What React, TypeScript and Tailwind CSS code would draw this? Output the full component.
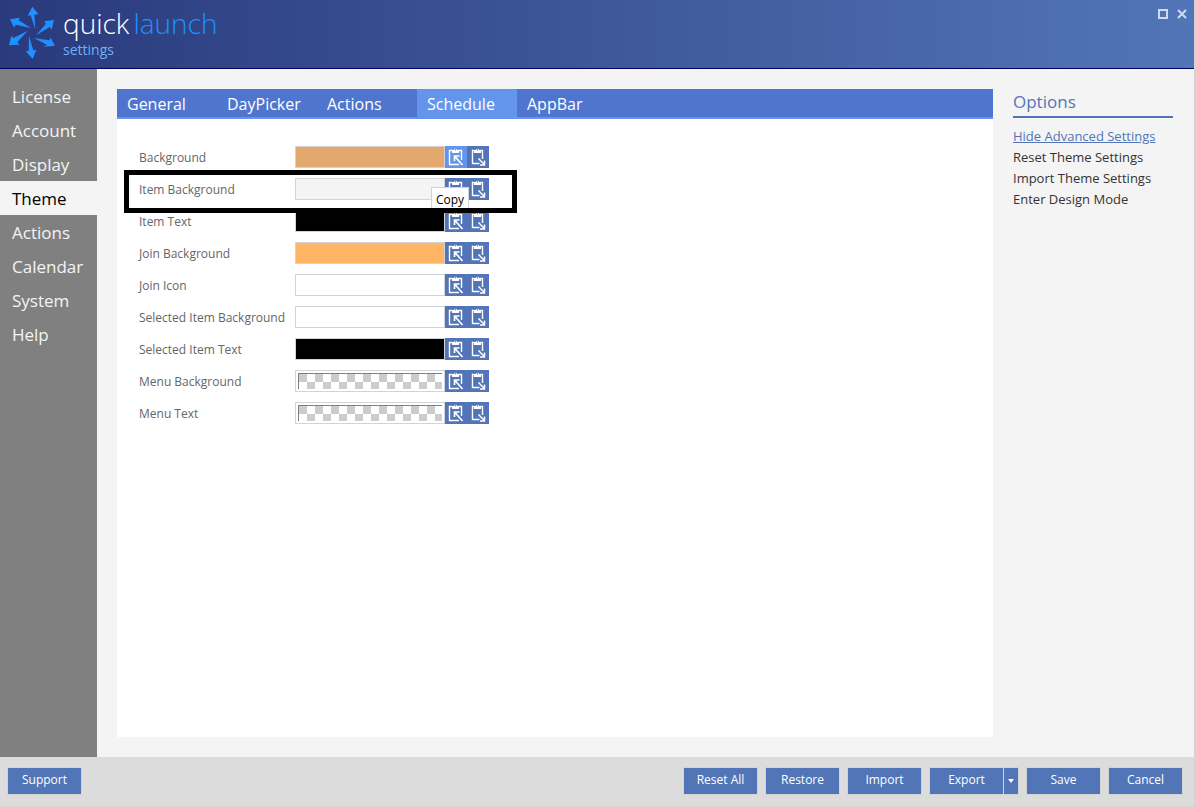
import React from 'react';

const menu = ['License', 'Account', 'Display', 'Theme', 'Actions', 'Calendar', 'System', 'Help'];

const tabs = ['General', 'DayPicker', 'Actions', 'Schedule', 'AppBar'];

const colors = [
  { name: 'Background', fill: 'bg-[#e3a96c]' },
  { name: 'Item Background', fill: 'bg-[#f4f4f4]' },
  { name: 'Item Text', fill: 'bg-black' },
  { name: 'Join Background', fill: 'bg-[#ffb566]' },
  { name: 'Join Icon', fill: 'bg-white' },
  { name: 'Selected Item Background', fill: 'bg-white' },
  { name: 'Selected Item Text', fill: 'bg-black' },
  { name: 'Menu Background', fill: '' },
  { name: 'Menu Text', fill: '' },
];

const options = ['Reset Theme Settings', 'Import Theme Settings', 'Enter Design Mode'];

const Logo = () => (
  <svg viewBox="24 18 144 162" className="w-12 h-[54px] shrink-0" fill="#1e90ff" aria-hidden="true">
    <path d="M97 20 83 47l9-1 14 42-3-44 12-2z" />
    <path d="M162 60l-30 4 6 7-30 35 41-25 6 8z" />
    <path d="M165 137l-13-24-4 8-47-7 40 20-10 6z" />
    <path d="M98 177l11-27-9 1-13-43-1 45-9 1z" />
    <path d="M27 136l31-2-6-7 31-35-43 22-6-7z" />
    <path d="M30 58l12 25 5-9 46 10-37-23 3-8z" />
  </svg>
);

const Clipboard = () => (
  <g stroke="none">
    <path d="M7 4h1.700a1.900 1.900 0 0 1 3.600 0H14v3H7z" fill="#fff" />
    <circle cx="10.500" cy="3.800" r=".7" fill="#5275b8" />
  </g>
);

const CopyIcon = () => (
  <svg viewBox="0 0 22 22" className="w-[22px] h-[22px]" fill="none" stroke="#fff" strokeWidth="1.4" aria-hidden="true">
    <path d="M7.500 4.500h-3v14h9.500M13.500 4.500h3v9.500" />
    <path d="M9.500 15v-5h5M9.500 10l8 9" strokeWidth="1.700" />
    <Clipboard />
  </svg>
);

const PasteIcon = () => (
  <svg viewBox="0 0 22 22" className="w-[22px] h-[22px]" fill="none" stroke="#fff" strokeWidth="1.4" aria-hidden="true">
    <path d="M7.500 4.500h-2v13h7M13.500 4.500h2v8.500" />
    <path d="M11.500 12.500l6 6.200M17.500 14.500v4.500h-4.500" strokeWidth="1.500" />
    <Clipboard />
  </svg>
);

const FooterButton = ({ children }: { children: React.ReactNode }) => (
  <button className="w-[75px] h-7 pb-0.5 bg-[#5275b8] border border-[#d3d3d3] text-white text-xs leading-4">
    {children}
  </button>
);

const App = () => {
  return (
    <div className="flex flex-col min-h-screen bg-[#f4f4f4] border-r border-[#d3d3d3] font-['Open_Sans','Noto_Sans',sans-serif]">
      {/* Title bar */}
      <header className="flex items-start h-[69px] pl-2 pt-1.5 pr-1.5 border-b border-[#000066] bg-linear-to-r from-[#2a3a7c] to-[#5275b8]">
        <Logo />
        <div className="ml-[7px] flex-1">
          <h1 className="text-[28px] leading-[34px] font-light text-white">
            quick<span className="ml-1 text-[#1e90ff]">launch</span>
          </h1>
          <p className="mt-0.5 text-sm leading-4 text-[#6fb1f7]">settings</p>
        </div>
        <div className="flex gap-[5px]">
          <button aria-label="Maximize" className="p-0.5">
            <svg viewBox="0 0 12 12" className="w-3 h-3" fill="none" stroke="#d0daee" strokeWidth="2">
              <path d="M2 2h8v8H2z" />
            </svg>
          </button>
          <button aria-label="Close" className="py-0.5">
            <svg viewBox="0 0 12 12" className="w-3 h-3" stroke="#d0daee" strokeWidth="2">
              <path d="M2 2l8 8M10 2l-8 8" />
            </svg>
          </button>
        </div>
      </header>

      <div className="flex flex-1">
        {/* Sidebar */}
        <nav className="w-[97px] shrink-0 pt-2.5 bg-[#808080]">
          {menu.map((item) => (
            <a
              key={item}
              href="#"
              className={`block h-[34px] pl-3 text-[17px] leading-9 ${
                item === 'Theme' ? 'bg-[#f4f4f4] text-black' : 'text-[#f4f4f4]'
              }`}
            >
              {item}
            </a>
          ))}
        </nav>

        {/* Theme panel */}
        <main className="flex-1 m-5 bg-white">
          <div className="flex h-[30px] bg-[#5075ce] border-b-2 border-[#6495ed]">
            {tabs.map((tab) => (
              <button
                key={tab}
                className={`w-[100px] pl-2.5 pt-0.5 text-left text-base leading-[26px] text-white ${
                  tab === 'Schedule' ? 'bg-[#6495ed]' : ''
                }`}
              >
                {tab}
              </button>
            ))}
          </div>

          <div className="relative flex flex-col gap-2.5 pt-[27px] pl-[22px]">
            {colors.map((color, i) => (
              <div key={color.name} className="flex h-[22px]">
                <label htmlFor={`color-${i}`} className="w-[156px] text-xs leading-6 text-[#666] whitespace-nowrap">
                  {color.name}
                </label>
                <button
                  id={`color-${i}`}
                  className={`w-[150px] border border-[#d3d3d3] ${color.fill || 'p-0.5 bg-white'}`}
                >
                  {!color.fill && (
                    <span className="block h-4 border-t border-l border-[#808080] bg-[conic-gradient(#fff_25%,#ccc_0_50%,#fff_0_75%,#ccc_0)] bg-size-[16px_16px]" />
                  )}
                </button>
                <button aria-label="Copy" className={i === 0 ? 'bg-[#6495ed]' : 'bg-[#5275b8]'}>
                  <CopyIcon />
                </button>
                <button aria-label="Paste" className="bg-[#5275b8]">
                  <PasteIcon />
                </button>
              </div>
            ))}

            {/* Tooltip and highlight over the second row */}
            <div className="absolute left-[314px] top-[68px] h-6 px-1 pt-0.5 bg-white border border-[#d3d3d3] text-xs leading-5 text-black">
              Copy
            </div>
            <div className="absolute left-[7px] top-[51px] w-[393px] h-[43px] border-5 border-black pointer-events-none" />
          </div>
        </main>

        {/* Options */}
        <aside className="w-40 shrink-0 mr-[21px] mt-5">
          <h2 className="h-[29px] mb-2 border-b-2 border-[#5275b8] text-[17px] leading-[26px] text-[#5275b8]">Options</h2>
          <ul className="text-[13px] leading-[21px] text-[#333] whitespace-nowrap">
            <li>
              <a href="#" className="text-[#5275b8] underline">Hide Advanced Settings</a>
            </li>
            {options.map((option) => (
              <li key={option}>
                <a href="#">{option}</a>
              </li>
            ))}
          </ul>
        </aside>
      </div>

      {/* Footer */}
      <footer className="flex gap-[7px] h-[50px] pt-2.5 pl-[7px] pr-[11px] bg-[#dcdcdc] border-b border-[#d3d3d3]">
        <FooterButton>Support</FooterButton>
        <div className="flex-1" />
        <FooterButton>Reset All</FooterButton>
        <FooterButton>Restore</FooterButton>
        <FooterButton>Import</FooterButton>
        <div className="flex">
          <FooterButton>Export</FooterButton>
          <button aria-label="Export options" className="flex items-center justify-center w-[15px] h-7 bg-[#5275b8] border-y border-r border-[#d3d3d3]">
            <svg viewBox="0 0 6 4" className="w-1.5 h-1" fill="#fff">
              <path d="M0 0h6L3 4z" />
            </svg>
          </button>
        </div>
        <FooterButton>Save</FooterButton>
        <FooterButton>Cancel</FooterButton>
      </footer>
    </div>
  );
};

export default App;
